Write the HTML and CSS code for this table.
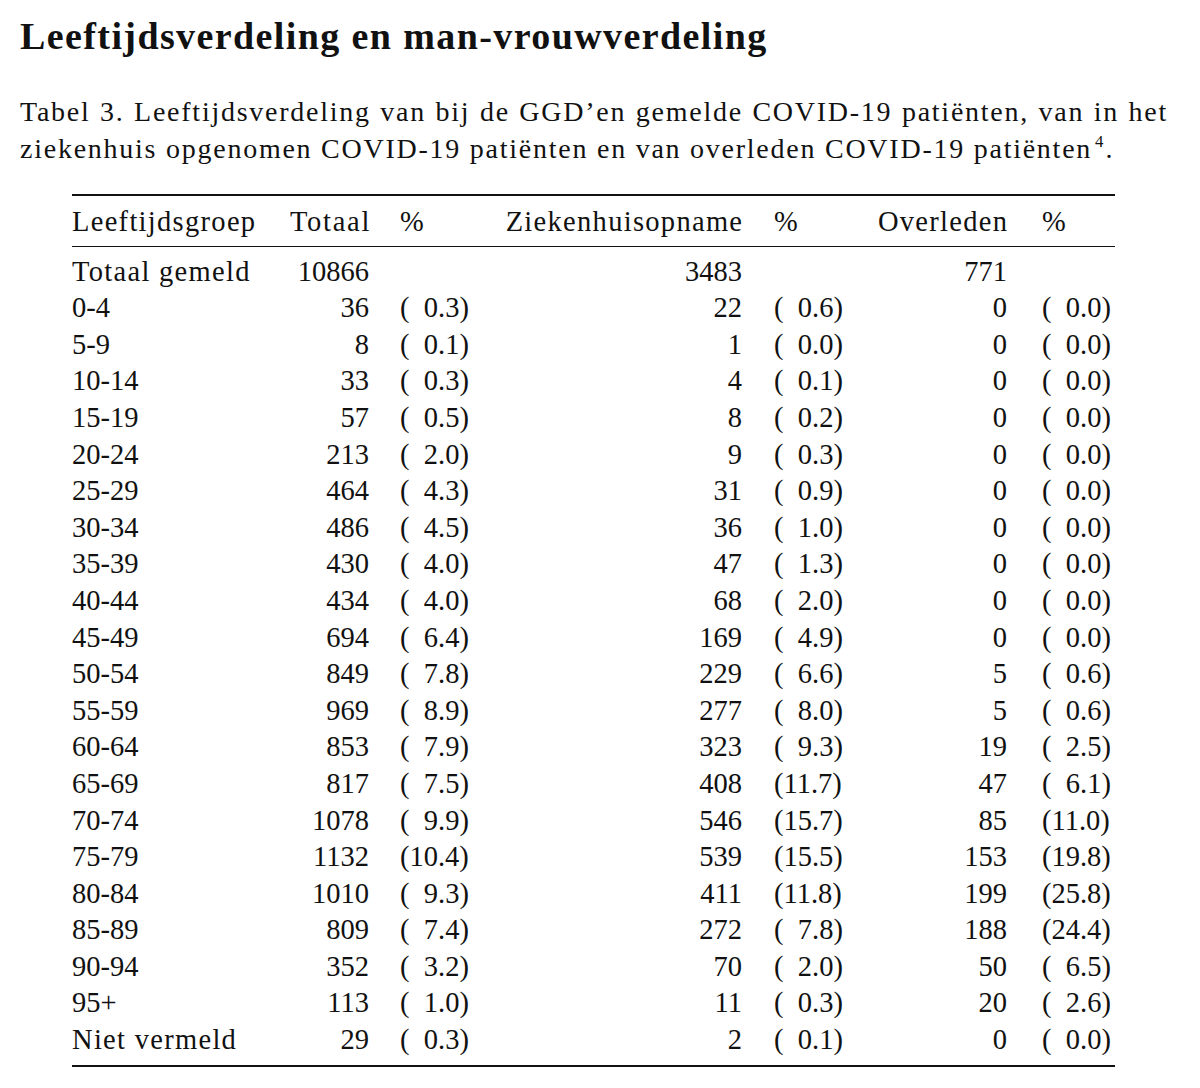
FILE: index.html
```html
<!DOCTYPE html>
<html lang="nl">
<head>
<meta charset="utf-8">
<title>Leeftijdsverdeling</title>
<link rel="stylesheet" href="styles.css">
</head>
<body>
<h2 class="title">Leeftijdsverdeling en man-vrouwverdeling</h2>
<p class="caption">Tabel 3. Leeftijdsverdeling van bij de GGD’en gemelde COVID-19 patiënten, van in het ziekenhuis opgenomen COVID-19 patiënten en van overleden COVID-19 patiënten<sup>4</sup>.</p>
<table class="data">
<colgroup>
<col class="w1"><col class="w2"><col class="w3"><col class="w4"><col class="w5"><col class="w6"><col class="w7">
</colgroup>
<thead>
<tr><th class="c1 txt">Leeftijdsgroep</th><th class="c2 txt">Totaal</th><th class="c3">%</th><th class="c4 txt">Ziekenhuisopname</th><th class="c5">%</th><th class="c6 txt">Overleden</th><th class="c7">%</th></tr>
</thead>
<tbody>
<tr><td class="c1 txt">Totaal gemeld</td><td class="c2">10866</td><td class="c3"></td><td class="c4">3483</td><td class="c5"></td><td class="c6">771</td><td class="c7"></td></tr>
<tr><td class="c1">0-4</td><td class="c2">36</td><td class="c3">(<span class="ph">0</span>0.3)</td><td class="c4">22</td><td class="c5">(<span class="ph">0</span>0.6)</td><td class="c6">0</td><td class="c7">(<span class="ph">0</span>0.0)</td></tr>
<tr><td class="c1">5-9</td><td class="c2">8</td><td class="c3">(<span class="ph">0</span>0.1)</td><td class="c4">1</td><td class="c5">(<span class="ph">0</span>0.0)</td><td class="c6">0</td><td class="c7">(<span class="ph">0</span>0.0)</td></tr>
<tr><td class="c1">10-14</td><td class="c2">33</td><td class="c3">(<span class="ph">0</span>0.3)</td><td class="c4">4</td><td class="c5">(<span class="ph">0</span>0.1)</td><td class="c6">0</td><td class="c7">(<span class="ph">0</span>0.0)</td></tr>
<tr><td class="c1">15-19</td><td class="c2">57</td><td class="c3">(<span class="ph">0</span>0.5)</td><td class="c4">8</td><td class="c5">(<span class="ph">0</span>0.2)</td><td class="c6">0</td><td class="c7">(<span class="ph">0</span>0.0)</td></tr>
<tr><td class="c1">20-24</td><td class="c2">213</td><td class="c3">(<span class="ph">0</span>2.0)</td><td class="c4">9</td><td class="c5">(<span class="ph">0</span>0.3)</td><td class="c6">0</td><td class="c7">(<span class="ph">0</span>0.0)</td></tr>
<tr><td class="c1">25-29</td><td class="c2">464</td><td class="c3">(<span class="ph">0</span>4.3)</td><td class="c4">31</td><td class="c5">(<span class="ph">0</span>0.9)</td><td class="c6">0</td><td class="c7">(<span class="ph">0</span>0.0)</td></tr>
<tr><td class="c1">30-34</td><td class="c2">486</td><td class="c3">(<span class="ph">0</span>4.5)</td><td class="c4">36</td><td class="c5">(<span class="ph">0</span>1.0)</td><td class="c6">0</td><td class="c7">(<span class="ph">0</span>0.0)</td></tr>
<tr><td class="c1">35-39</td><td class="c2">430</td><td class="c3">(<span class="ph">0</span>4.0)</td><td class="c4">47</td><td class="c5">(<span class="ph">0</span>1.3)</td><td class="c6">0</td><td class="c7">(<span class="ph">0</span>0.0)</td></tr>
<tr><td class="c1">40-44</td><td class="c2">434</td><td class="c3">(<span class="ph">0</span>4.0)</td><td class="c4">68</td><td class="c5">(<span class="ph">0</span>2.0)</td><td class="c6">0</td><td class="c7">(<span class="ph">0</span>0.0)</td></tr>
<tr><td class="c1">45-49</td><td class="c2">694</td><td class="c3">(<span class="ph">0</span>6.4)</td><td class="c4">169</td><td class="c5">(<span class="ph">0</span>4.9)</td><td class="c6">0</td><td class="c7">(<span class="ph">0</span>0.0)</td></tr>
<tr><td class="c1">50-54</td><td class="c2">849</td><td class="c3">(<span class="ph">0</span>7.8)</td><td class="c4">229</td><td class="c5">(<span class="ph">0</span>6.6)</td><td class="c6">5</td><td class="c7">(<span class="ph">0</span>0.6)</td></tr>
<tr><td class="c1">55-59</td><td class="c2">969</td><td class="c3">(<span class="ph">0</span>8.9)</td><td class="c4">277</td><td class="c5">(<span class="ph">0</span>8.0)</td><td class="c6">5</td><td class="c7">(<span class="ph">0</span>0.6)</td></tr>
<tr><td class="c1">60-64</td><td class="c2">853</td><td class="c3">(<span class="ph">0</span>7.9)</td><td class="c4">323</td><td class="c5">(<span class="ph">0</span>9.3)</td><td class="c6">19</td><td class="c7">(<span class="ph">0</span>2.5)</td></tr>
<tr><td class="c1">65-69</td><td class="c2">817</td><td class="c3">(<span class="ph">0</span>7.5)</td><td class="c4">408</td><td class="c5">(11.7)</td><td class="c6">47</td><td class="c7">(<span class="ph">0</span>6.1)</td></tr>
<tr><td class="c1">70-74</td><td class="c2">1078</td><td class="c3">(<span class="ph">0</span>9.9)</td><td class="c4">546</td><td class="c5">(15.7)</td><td class="c6">85</td><td class="c7">(11.0)</td></tr>
<tr><td class="c1">75-79</td><td class="c2">1132</td><td class="c3">(10.4)</td><td class="c4">539</td><td class="c5">(15.5)</td><td class="c6">153</td><td class="c7">(19.8)</td></tr>
<tr><td class="c1">80-84</td><td class="c2">1010</td><td class="c3">(<span class="ph">0</span>9.3)</td><td class="c4">411</td><td class="c5">(11.8)</td><td class="c6">199</td><td class="c7">(25.8)</td></tr>
<tr><td class="c1">85-89</td><td class="c2">809</td><td class="c3">(<span class="ph">0</span>7.4)</td><td class="c4">272</td><td class="c5">(<span class="ph">0</span>7.8)</td><td class="c6">188</td><td class="c7">(24.4)</td></tr>
<tr><td class="c1">90-94</td><td class="c2">352</td><td class="c3">(<span class="ph">0</span>3.2)</td><td class="c4">70</td><td class="c5">(<span class="ph">0</span>2.0)</td><td class="c6">50</td><td class="c7">(<span class="ph">0</span>6.5)</td></tr>
<tr><td class="c1">95+</td><td class="c2">113</td><td class="c3">(<span class="ph">0</span>1.0)</td><td class="c4">11</td><td class="c5">(<span class="ph">0</span>0.3)</td><td class="c6">20</td><td class="c7">(<span class="ph">0</span>2.6)</td></tr>
<tr><td class="c1 txt">Niet vermeld</td><td class="c2">29</td><td class="c3">(<span class="ph">0</span>0.3)</td><td class="c4">2</td><td class="c5">(<span class="ph">0</span>0.1)</td><td class="c6">0</td><td class="c7">(<span class="ph">0</span>0.0)</td></tr>
</tbody>
</table>
</body>
</html>
```
FILE: styles.css
```css
html, body {
  margin: 0;
  padding: 0;
  background: #ffffff;
}

body {
  padding: 0 20px;
  color: #111111;
  font-family: "Liberation Serif", "Times New Roman", serif;
}

.title {
  margin: 0;
  padding-top: 15.5px;
  font-size: 38px;
  line-height: 40px;
  font-weight: bold;
  letter-spacing: 1.4px;
}

.caption {
  margin: 38.5px 0 0 0;
  width: 1148px;
  font-size: 28px;
  line-height: 36.5px;
  letter-spacing: 1.75px;
  text-align: justify;
}

.caption sup {
  font-size: 0.6em;
  line-height: 1;
  vertical-align: 0.6em;
  letter-spacing: 0;
  margin-left: 3px;
  margin-right: 2px;
}

.data {
  margin: 27px 0 0 52px;
  width: 1043px;
  table-layout: fixed;
  border-collapse: separate;
  border-spacing: 0;
  font-size: 28.5px;
  line-height: 36.6px;
}

.w1 { width: 218px; }
.w2 { width: 95px; }
.w3 { width: 95px; }
.w4 { width: 278px; }
.w5 { width: 102px; }
.w6 { width: 163px; }
.w7 { width: 92px; }

.data th,
.data td {
  padding: 0;
  font-weight: normal;
  white-space: nowrap;
}

.data th {
  border-top: 2px solid #111111;
  border-bottom: 1.3px solid #111111;
  padding-top: 8px;
  padding-bottom: 5px;
}

.data tbody tr:first-child td {
  padding-top: 7px;
}

.data tbody tr:last-child td {
  padding-bottom: 6px;
  border-bottom: 2.4px solid #111111;
}

.c1 { text-align: left; }
.c2, .c4, .c6 { text-align: right; padding-right: 16px !important; }
.c3, .c5 { text-align: left; padding-left: 16px !important; }
.c3 { padding-left: 15px !important; }
.c7 { text-align: left; padding-left: 19px !important; }

.txt {
  letter-spacing: 1.3px;
}

.c2.txt { letter-spacing: 1.7px; padding-right: 14.3px !important; }
.c4.txt, .c6.txt { padding-right: 14.7px !important; }

.ph {
  visibility: hidden;
}
```
